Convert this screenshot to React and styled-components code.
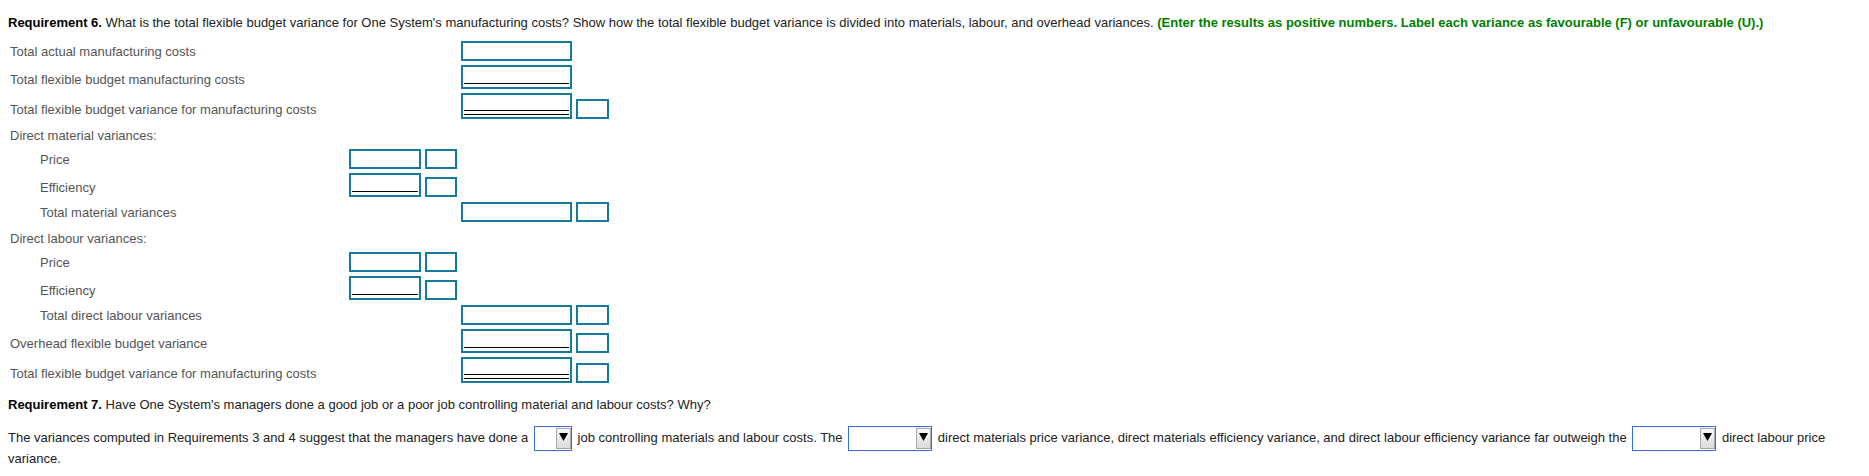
import React from 'react'
import styled, { createGlobalStyle } from 'styled-components'

const GlobalStyle = createGlobalStyle`
  body {
    margin: 8px;
    background: #fff;
    font-family: 'Liberation Sans', Arial, sans-serif;
    font-size: 13px;
    color: #222;
  }
`

const rows = [
  { label: 'Total actual manufacturing costs', cells: [{ col: 4, rule: 'none' }] },
  { label: 'Total flexible budget manufacturing costs', cells: [{ col: 4, rule: 'single' }] },
  {
    label: 'Total flexible budget variance for manufacturing costs',
    cells: [{ col: 4, rule: 'double' }, { col: 5, tag: true }],
  },
  { heading: 'Direct material variances:' },
  { label: 'Price', indent: true, cells: [{ col: 2, rule: 'none' }, { col: 3, tag: true }] },
  { label: 'Efficiency', indent: true, loose: true, cells: [{ col: 2, rule: 'single' }, { col: 3, tag: true }] },
  { label: 'Total material variances', indent: true, cells: [{ col: 4, rule: 'none' }, { col: 5, tag: true }] },
  { heading: 'Direct labour variances:' },
  { label: 'Price', indent: true, cells: [{ col: 2, rule: 'none' }, { col: 3, tag: true }] },
  { label: 'Efficiency', indent: true, loose: true, cells: [{ col: 2, rule: 'single' }, { col: 3, tag: true }] },
  { label: 'Total direct labour variances', indent: true, cells: [{ col: 4, rule: 'none' }, { col: 5, tag: true }] },
  { label: 'Overhead flexible budget variance', cells: [{ col: 4, rule: 'single' }, { col: 5, tag: true }] },
  {
    label: 'Total flexible budget variance for manufacturing costs',
    cells: [{ col: 4, rule: 'double' }, { col: 5, tag: true }],
  },
]

const Dropdown = ({ width }) => (
  <Select $width={width}>
    <ArrowButton>
      <svg width="9" height="8" viewBox="0 0 9 8">
        <polygon points="0,0 9,0 4.5,8" fill="#000" />
      </svg>
    </ArrowButton>
  </Select>
)

const App = () => {
  return (
    <Page>
      <GlobalStyle />
      <Question>
        <Lead>Requirement 6.</Lead> What is the total flexible budget variance for One System's manufacturing costs?
        Show how the total flexible budget variance is divided into materials, labour, and overhead variances.{' '}
        <Instruction>
          (Enter the results as positive numbers. Label each variance as favourable (F) or unfavourable (U).)
        </Instruction>
      </Question>

      <Worksheet>
        {rows.map((row, i) =>
          row.heading ? (
            <Row key={i} $heading>
              <Label>{row.heading}</Label>
            </Row>
          ) : (
            <Row key={i} $loose={row.loose}>
              <Label $indent={row.indent}>{row.label}</Label>
              {row.cells.map((cell, j) =>
                cell.tag ? (
                  <TagBox key={j} $col={cell.col} />
                ) : (
                  <Field key={j} $col={cell.col} $rule={cell.rule}>
                    {cell.rule !== 'none' && <Rule $double={cell.rule === 'double'} />}
                  </Field>
                )
              )}
            </Row>
          )
        )}
      </Worksheet>

      <Question>
        <Lead>Requirement 7.</Lead> Have One System's managers done a good job or a poor job controlling material and
        labour costs? Why?
      </Question>

      <Answer>
        <span>The variances computed in Requirements 3 and 4 suggest that the managers have done a</span>{' '}
        <Dropdown width={38} /> <span>job controlling materials and labour costs. The</span> <Dropdown width={84} />{' '}
        <span>
          direct materials price variance, direct materials efficiency variance, and direct labour efficiency variance
          far outweigh the
        </span>{' '}
        <Dropdown width={84} /> <span>direct labour price</span> <span>variance.</span>
      </Answer>
    </Page>
  )
}

const fieldHeights = { none: 20, single: 24, double: 26 }

const Page = styled.div`
  padding-top: 7px;
`

const Question = styled.p`
  margin: 0;
  line-height: 15px;
  color: #222;
`

const Lead = styled.b`
  color: #000;
`

const Instruction = styled.b`
  color: #008000;
`

const Worksheet = styled.div`
  display: flex;
  flex-direction: column;
  gap: 4px;
  margin: 11px 0 14px;
`

const Row = styled.div`
  display: grid;
  grid-template-columns: 337px 72px 32px 111px 33px;
  column-gap: 4px;
  align-items: end;
  min-height: ${(p) => (p.$heading ? '22px' : '0')};
  padding-bottom: ${(p) => (p.$loose ? '1px' : '0')};
`

const Label = styled.span`
  grid-column: 1;
  padding: 0 0 1px ${(p) => (p.$indent ? '32px' : '2px')};
  line-height: 16px;
  color: #555;
  white-space: nowrap;
`

const Field = styled.div`
  grid-column: ${(p) => p.$col};
  box-sizing: border-box;
  height: ${(p) => fieldHeights[p.$rule]}px;
  border: 2px solid #137b9b;
  background: #fff;
  display: flex;
  flex-direction: column;
  justify-content: flex-end;
  padding: 0 1px ${(p) => (p.$rule === 'double' ? '2px' : '3px')};
`

const Rule = styled.div`
  height: ${(p) => (p.$double ? '3px' : '0')};
  border-top: 1px solid #000;
  border-bottom: ${(p) => (p.$double ? '1px solid #000' : 'none')};
`

const TagBox = styled.div`
  grid-column: ${(p) => p.$col};
  box-sizing: border-box;
  height: 20px;
  border: 2px solid #137b9b;
  background: #fff;
`

const Answer = styled.p`
  margin: 14px 0 0;
  line-height: 16px;
  color: #222;
`

const Select = styled.span`
  display: inline-flex;
  justify-content: flex-end;
  align-items: flex-start;
  box-sizing: border-box;
  width: ${(p) => p.$width}px;
  height: 25px;
  margin: 0 2px;
  padding: 1px 0 0;
  border: 1px solid #3d6fd1;
  background: #fff;
  vertical-align: middle;
`

const ArrowButton = styled.span`
  display: flex;
  justify-content: center;
  box-sizing: border-box;
  width: 15px;
  height: 21px;
  padding-top: 4px;
  border: 1px solid #a9a9a9;
  background: linear-gradient(#f6f6f6, #dcdcdc);
`

export default App
